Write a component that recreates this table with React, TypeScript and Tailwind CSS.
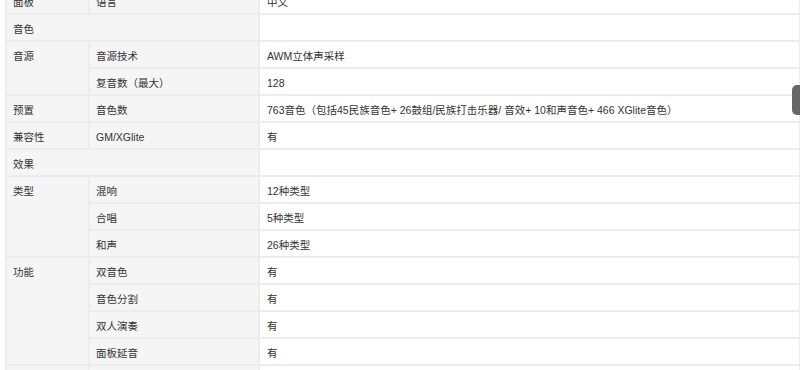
import React from "react";

type Row = {
  group?: string;
  span?: number;
  wide?: boolean;
  label?: string;
  value: string;
};

const rows: Row[] = [
  { group: "面板", label: "语言", value: "中文" },
  { group: "音色", wide: true, value: "" },
  { group: "音源", span: 2, label: "音源技术", value: "AWM立体声采样" },
  { label: "复音数（最大）", value: "128" },
  {
    group: "预置",
    label: "音色数",
    value:
      "763音色（包括45民族音色+ 26鼓组/民族打击乐器/ 音效+ 10和声音色+ 466 XGlite音色）",
  },
  { group: "兼容性", label: "GM/XGlite", value: "有" },
  { group: "效果", wide: true, value: "" },
  { group: "类型", span: 3, label: "混响", value: "12种类型" },
  { label: "合唱", value: "5种类型" },
  { label: "和声", value: "26种类型" },
  { group: "功能", span: 4, label: "双音色", value: "有" },
  { label: "音色分割", value: "有" },
  { label: "双人演奏", value: "有" },
  { label: "面板延音", value: "有" },
  { group: "", label: "", value: "" },
];

const cell = "border-2 border-[#ececec] px-[6px] pt-[4px] pb-0 align-top leading-[21px] text-left font-normal";

export default function App() {
  return (
    <div className="relative h-[370px] w-[800px] overflow-hidden bg-white">
      <table
        className="ml-[5px] -mt-[14px] w-[796px] table-fixed border-collapse text-[10.5px] text-[#333]"
        style={{ fontFamily: '"Liberation Sans", Arial, "Noto Sans CJK SC", sans-serif' }}
      >
        <colgroup>
          <col className="w-[83px]" />
          <col className="w-[170px]" />
          <col />
        </colgroup>
        <tbody>
          {rows.map((row, i) => (
            <tr key={i}>
              {row.group !== undefined && (
                <th
                  rowSpan={row.span}
                  colSpan={row.wide ? 2 : undefined}
                  className={`${cell} bg-[#f5f5f5]`}
                >
                  {row.group}
                </th>
              )}
              {!row.wide && (
                <th className={`${cell} bg-[#f5f5f5]`}>{row.label}</th>
              )}
              <td className={`${cell} bg-white pl-[7px]`}>{row.value || "\u00a0"}</td>
            </tr>
          ))}
        </tbody>
      </table>
      <div className="absolute right-0 top-[85px] h-[30px] w-[8px] rounded-l-[5px] bg-[#666]" />
    </div>
  );
}
